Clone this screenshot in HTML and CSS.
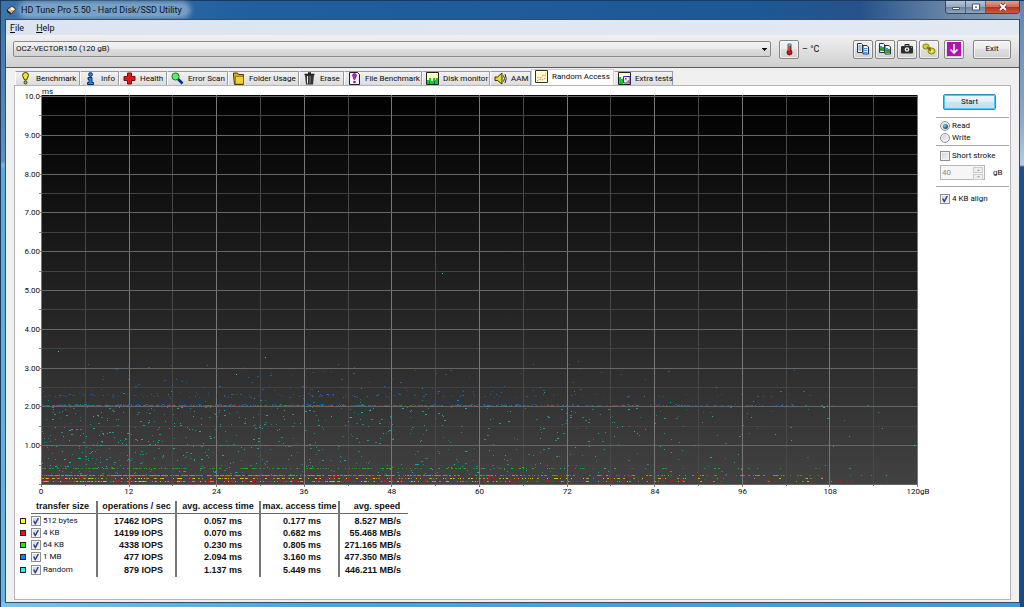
FILE: index.html
```
<!DOCTYPE html>
<html lang="en">
<head>
<meta charset="utf-8">
<title>HD Tune Pro 5.50 - Hard Disk/SSD Utility</title>
<link rel="stylesheet" href="styles.css">
</head>
<body>
<div class="window">
  <header class="titlebar">
    <svg class="app-icon" viewBox="0 0 12 12"><path d="M1 6 6 2l5 3-5 5z" fill="#e8c9a0" stroke="#3b2a20"/><path d="M1 6v2l4 3 1-1z" fill="#222"/><circle cx="7" cy="5" r="1.6" fill="#fff"/><path d="M5 7l4-1-3 3z" fill="#d08a3c"/></svg>
    <h1 class="title">HD Tune Pro 5.50 - Hard Disk/SSD Utility</h1>
    <div class="caption">
      <button class="cap" aria-label="Minimize"><svg viewBox="0 0 10 10"><path d="M1.500 5.500h7v2h-7z" fill="#fff" stroke="#44566c"/></svg></button>
      <button class="cap" aria-label="Maximize"><svg viewBox="0 0 10 10"><path d="M1.500 2h7v6h-7z" fill="#fff" stroke="#44566c"/><path d="M4 4.500h2v1.200H4z" fill="#44566c"/></svg></button>
      <button class="cap cap-close" aria-label="Close"><svg viewBox="0 0 10 10"><path d="M2 2l6 6M8 2 2 8" stroke="#6b2a25" stroke-width="3.600"/><path d="M2 2l6 6M8 2 2 8" stroke="#fff" stroke-width="2"/></svg></button>
    </div>
  </header>
  <div class="client">
    <nav class="menu"><a href="#file"><u>F</u>ile</a><a href="#help"><u>H</u>elp</a></nav>
    <div class="toolbar">
      <select class="drive" aria-label="Drive"><option>OCZ-VECTOR150 (120 gB)</option></select>
      <button class="tool" aria-label="Temperature"><svg viewBox="0 0 14 14"><path d="M6 2h3v7H6z" fill="#c81414" stroke="#333" stroke-width=".8"/><path d="M6.400 1h2.200v3H6.400z" fill="#4ad0d8"/><circle cx="7.500" cy="10.500" r="2.500" fill="#d01010" stroke="#401010" stroke-width=".8"/><path d="M7 4v5" stroke="#ff7a6a"/></svg></button>
      <span class="temp">– °C</span>
      <div class="tools">
        <button class="tool" aria-label="Copy text"><svg viewBox="0 0 14 14"><path d="M1.500 1.500h4l1 1v8h-5zM7 3.500h4l1.500 1.500v7H7z" fill="#eef6ff" stroke="#333"/><path d="M2.500 4h3M2.500 6h3M2.500 8h3M8 6.500h3.500M8 8.500h3.500M8 10.500h3.500" stroke="#3b8ad8"/></svg></button>
        <button class="tool" aria-label="Copy image"><svg viewBox="0 0 14 14"><path d="M1.500 1.500h4l1 1v8h-5zM7 3.500h4l1.500 1.500v7H7z" fill="#eef6ff" stroke="#333"/><path d="M2 5h4v4H2zM7.500 7h4.500v4H7.500z" fill="#28a038"/><path d="M2 4h2v2H2zM8 6h2v2H8z" fill="#3090d0"/></svg></button>
        <button class="tool" aria-label="Save screenshot"><svg viewBox="0 0 14 14"><path d="M5 2.500h4v2H5z" fill="#aaa" stroke="#222"/><rect x="1" y="4" width="12" height="7.500" rx="1" fill="#29302f"/><circle cx="7" cy="7.500" r="2.300" fill="#f4f4f4"/><circle cx="7" cy="7.500" r="1" fill="#333"/><path d="M11 5h1v1h-1z" fill="#3ad060"/></svg></button>
        <button class="tool" aria-label="Options"><svg viewBox="0 0 14 14"><g fill="#d8cf20" stroke="#77700a" stroke-width=".8"><ellipse cx="4" cy="4.500" rx="3.200" ry="2.600"/><ellipse cx="9.500" cy="9" rx="3.500" ry="3"/></g><path d="M5 5l4 4M8 5v4" stroke="#77700a" stroke-width="1.400"/><circle cx="9.800" cy="9.300" r="1.100" fill="#fff8a0"/></svg></button>
        <button class="tool tool-gap" aria-label="Save"><svg viewBox="0 0 14 14"><path d="M0 0h14v14H0z" fill="#b012b4"/><path d="M7 2v8M3.500 7.500 7 11l3.500-3.500" fill="none" stroke="#fff" stroke-width="1.600"/></svg></button>
      </div>
      <button class="push exit">Exit</button>
    </div>
    <main class="body">
      <div class="tabs" role="tablist">
        <button class="tab" role="tab"><svg viewBox="0 0 13 13"><path d="M3.500 3.500a3 3 0 0 1 6 0L7.500 8h-2z" fill="#f0e81c" stroke="#3b3a10"/><circle cx="6.500" cy="10.500" r="1.500" fill="#c9c114" stroke="#3b3a10"/></svg>Benchmark</button>
        <button class="tab" role="tab"><svg viewBox="0 0 13 13"><circle cx="6.500" cy="2.500" r="1.900" fill="#1c8df0" stroke="#102c60"/><path d="M4 5.500h4v5h1.500v2h-6v-2H5v-3H4z" fill="#1c8df0" stroke="#102c60"/></svg>Info</button>
        <button class="tab" role="tab"><svg viewBox="0 0 13 13"><path d="M4.500 1h4v3.500H12v4H8.500V12h-4V8.500H1v-4h3.500z" fill="#e01818" stroke="#701010"/></svg>Health</button>
        <button class="tab" role="tab"><svg viewBox="0 0 13 13"><path d="m7 7 4.500 4.500" stroke="#1420b0" stroke-width="2.600"/><circle cx="4.500" cy="4.500" r="3.600" fill="#58f060" stroke="#227838"/></svg>Error Scan</button>
        <button class="tab" role="tab"><svg viewBox="0 0 13 13"><path d="M1.500 3V1h4l1 1.500h5v10h-9z" fill="#d5a611" stroke="#453808"/><path d="M3.500 4.500h8v7.500h-8z" fill="#f2cf38" stroke="#705a10" stroke-width=".6"/></svg>Folder Usage</button>
        <button class="tab" role="tab"><svg viewBox="0 0 13 13"><path d="M1.500 2.500h10M5 1h3" stroke="#222" stroke-width="1.600"/><path d="M2 3h9l-1 9.500H3z" fill="#333"/><path d="M4.500 4v7.500" stroke="#eee"/><path d="M7 4v7.500" stroke="#888"/></svg>Erase</button>
        <button class="tab" role="tab"><svg viewBox="0 0 13 13"><path d="M1.500.500h8l2 2v10h-10z" fill="#f4f4ff" stroke="#222"/><path d="M4.500 3.500a2 2 0 0 1 4 0L7 7.500H6z" fill="#c81cc8" stroke="#601060" stroke-width=".6"/><circle cx="6.500" cy="10" r="1.300" fill="#8c148c"/></svg>File Benchmark</button>
        <button class="tab" role="tab"><svg viewBox="0 0 13 13"><path d="M.500.500h12v12H.500z" fill="#ffffc0" stroke="#222"/><path d="M1 12V8h2V6h2v3h2V6h2v2h1V6h2v6z" fill="#10d020"/><path d="M3.500 12V9M8.500 12V9" stroke="#1840d0"/></svg>Disk monitor</button>
        <button class="tab" role="tab"><svg viewBox="0 0 13 13"><path d="M1 5h2.500L8 1v11L3.500 8.500H1z" fill="#e8dc20" stroke="#333008"/><path d="M9.500 3.500q2 3 0 6M11 2q2.500 4.500 0 9" fill="none" stroke="#333008"/></svg>AAM</button>
        <button class="tab active" role="tab" aria-selected="true"><svg viewBox="0 0 13 13"><path d="M.500.500h12v12H.500z" fill="#ffffd0" stroke="#333"/><path d="M2 8l2-1 2 1 2-3 2 1 1-3" fill="none" stroke="#e88018" stroke-dasharray="1 .700"/><path d="M2 11l3-2 2 1 4-2" fill="none" stroke="#d04070" stroke-dasharray="1 1"/></svg>Random Access</button>
        <button class="tab" role="tab"><svg viewBox="0 0 13 13"><path d="M.500.500h12v12H.500z" fill="#fff" stroke="#222"/><path d="M1 1h11v2H1z" fill="#ffffc0"/><path d="M1 12V5h2v2h2v5z" fill="#10c828"/><path d="M5.500 4.500h6.500V11H5.500z" fill="#f0e0f0" stroke="#3030a0"/><path d="M7 6h1.500v1.500H7zM9.500 8.500H11V10H9.500z" fill="#d03030"/></svg>Extra tests</button>
      </div>
      <section class="panel">
        <div class="results">
          <div class="chart">
            <div class="unit">ms</div>
            <div class="y-axis"><span>10.0</span><span>9.00</span><span>8.00</span><span>7.00</span><span>6.00</span><span>5.00</span><span>4.00</span><span>3.00</span><span>2.00</span><span>1.00</span></div>
            <div class="plot"><svg id="plot" shape-rendering="crispEdges" role="img" aria-label="Random access time against position"></svg></div>
            <div class="x-axis"><div class="x-labels"><span>0</span><span>12</span><span>24</span><span>36</span><span>48</span><span>60</span><span>72</span><span>84</span><span>96</span><span>108</span><span>120gB</span></div></div>
          </div>
          <table class="stats">
            <thead><tr><th class="swatch-cell"></th><th class="c1">transfer size</th><th class="c2">operations / sec</th><th class="c3">avg. access time</th><th class="c4">max. access time</th><th class="c5">avg. speed</th></tr></thead>
            <tbody>
              <tr><td class="swatch-cell"><i class="swatch yellow"></i></td><td><label><input type="checkbox" checked>512 bytes</label></td><td>17462 IOPS</td><td>0.057 ms</td><td>0.177 ms</td><td>8.527 MB/s</td></tr>
              <tr><td class="swatch-cell"><i class="swatch red"></i></td><td><label><input type="checkbox" checked>4 KB</label></td><td>14199 IOPS</td><td>0.070 ms</td><td>0.682 ms</td><td>55.468 MB/s</td></tr>
              <tr><td class="swatch-cell"><i class="swatch green"></i></td><td><label><input type="checkbox" checked>64 KB</label></td><td>4338 IOPS</td><td>0.230 ms</td><td>0.805 ms</td><td>271.165 MB/s</td></tr>
              <tr><td class="swatch-cell"><i class="swatch blue"></i></td><td><label><input type="checkbox" checked>1 MB</label></td><td>477 IOPS</td><td>2.094 ms</td><td>3.160 ms</td><td>477.350 MB/s</td></tr>
              <tr><td class="swatch-cell"><i class="swatch cyan"></i></td><td><label><input type="checkbox" checked>Random</label></td><td>879 IOPS</td><td>1.137 ms</td><td>5.449 ms</td><td>446.211 MB/s</td></tr>
            </tbody>
          </table>
        </div>
        <aside class="side">
          <button class="push start">Start</button>
          <div class="group modes">
            <label><input type="radio" name="mode" checked>Read</label>
            <label><input type="radio" name="mode">Write</label>
          </div>
          <div class="group stroke">
            <label><input type="checkbox">Short stroke</label>
            <div class="size"><span class="spin"><input id="size" type="text" value="40" disabled><span class="arrows"><button disabled aria-label="Increase"><svg viewBox="0 0 6 4"><path d="M1 3h4L3 1z" fill="#999"/></svg></button><button disabled aria-label="Decrease"><svg viewBox="0 0 6 4"><path d="M1 1h4L3 3z" fill="#999"/></svg></button></span></span><label for="size">gB</label></div>
          </div>
          <div class="group align"><label><input type="checkbox" checked>4 KB align</label></div>
        </aside>
      </section>
    </main>
  </div>
</div>
<script src="plot.js"></script>
</body>
</html>
```
FILE: styles.css
```
* { box-sizing: border-box; }
body {
  margin: 0;
  font: 8px/10px Roboto, sans-serif;
  color: #0c0c0c;
}
button, input, select { font: inherit; color: inherit; margin: 0; padding: 0; }
svg { display: block; }

.window {
  min-height: 100vh;
  display: flex;
  flex-direction: column;
  padding: 0 4px 4px;
  border: 1px solid #1d3a5c;
  border-width: 1px 0 0 1px;
  background:
    linear-gradient(#5d86b4, #8aa9cc 120px, #b4cce4 164px, #1b4f8f 166px, #174a88) right / 4px 100% no-repeat,
    linear-gradient(90deg, #7cc4ee, #4aa6dc 30%, #3f9ad6) bottom / 100% 5px no-repeat,
    linear-gradient(#3873ab, #5b93c2 160px, #86b3dc 164px, #5aabdc 168px, #66b4e2) left / 6px 100% no-repeat,
    linear-gradient(90deg, #3a72a9, #1f5f9f 25%, #1c5896 75%, #26528b 84%, #6d88a8 93%, #8ba0b8);
}
.titlebar { display: flex; align-items: center; height: 18px; gap: 4px; padding-left: 1px; }
.app-icon { width: 11px; height: 12px; }
.title {
  margin: 0;
  padding: 0 6px 0 0;
  font: 9px/12px Roboto, "Noto Sans", sans-serif;
  color: #0c1420;
  border-radius: 7px;
  background: rgba(170, 196, 220, .6);
  box-shadow: 0 0 5px 3px rgba(170, 196, 220, .6);
}
.caption {
  display: flex;
  align-self: flex-start;
  margin-left: auto;
  border: 1px solid #35475c;
  border-top: 0;
  border-radius: 0 0 4px 4px;
  overflow: hidden;
}
.cap {
  width: 20px;
  height: 12px;
  display: grid;
  place-items: center;
  border: 0;
  border-right: 1px solid #4d6078;
  background: linear-gradient(#b7c5d5, #95a8bd 48%, #6d839e 50%, #8fa6c0);
}
.cap svg { width: 10px; height: 10px; }
.cap-close { width: 33px; border-right: 0; background: linear-gradient(#dba194, #cb6a56 48%, #b62f18 50%, #cf5b3c); }

.client {
  flex: 1;
  display: flex;
  flex-direction: column;
  border: 1px solid #3b4c5e;
  background: #f0f0f0;
}
.menu {
  height: 15px;
  display: flex;
  gap: 12px;
  padding-left: 4px;
  background: linear-gradient(90deg, #dbe4f0, #e3e9f3);
  font: 9px/16px Roboto, "Noto Sans", sans-serif;
}
.menu a { color: inherit; text-decoration: none; }
.toolbar {
  height: 33px;
  display: flex;
  align-items: center;
  padding: 0 8px 4px 7px;
  border-bottom: 1px solid #5c5c5c;
  background: linear-gradient(#f1f1f1, #cfcfcf);
}
.drive {
  flex: 1;
  height: 16px;
  appearance: none;
  padding: 0 2px;
  border: 1px solid #8a8a8a;
  border-radius: 2px;
  background:
    linear-gradient(#111, #111) right 3px top 6px / 5px 1px no-repeat,
    linear-gradient(#111, #111) right 4px top 7px / 3px 1px no-repeat,
    linear-gradient(#111, #111) right 5px top 8px / 1px 1px no-repeat,
    linear-gradient(#f2f2f2, #ebebeb 48%, #dddddd 50%, #d2d2d2);
}
.tool, .push {
  display: grid;
  place-items: center;
  border: 1px solid #858585;
  border-radius: 2px;
  background: linear-gradient(#f3f3f3, #ebebeb 48%, #dedede 50%, #d2d2d2);
  box-shadow: inset 0 0 0 1px rgba(255, 255, 255, .6);
}
.tool { width: 20px; height: 19px; }
.tool svg { width: 14px; height: 14px; }
.drive + .tool { margin-left: 8px; }
.temp { width: 54px; padding-left: 3px; font-size: 9px; }
.tools { display: flex; gap: 2px; }
.tool-gap { margin-left: 3px; }
.exit { width: 38px; height: 19px; margin-left: 9px; }

.body { flex: 1; display: flex; flex-direction: column; padding: 1px 8px 2px; }
.tabs {
  display: grid;
  grid-template-columns: 65px 39px 48px 61px 71px 45px 78px 68px 41px 83px 59px;
  align-items: end;
  height: 16px;
  padding-left: 1px;
}
.tab {
  display: flex;
  align-items: center;
  gap: 4px;
  height: 14px;
  padding: 0 0 0 3px;
  border: 1px solid #9a9ca4;
  border-bottom: 0;
  border-left-color: #fff;
  background: linear-gradient(#f2f2f2, #dcdcdc);
  white-space: nowrap;
}
.tab svg { width: 13px; height: 13px; flex: none; }
.tab.active { height: 16px; padding-bottom: 2px; background: #fff; border-color: #d0d0d0; }
.panel {
  flex: 1;
  display: flex;
  border: 1px solid #b4b4b8;
  background: #fff;
}
.results { flex: 1; min-width: 0; display: flex; flex-direction: column; }
.chart {
  flex: 1;
  display: grid;
  grid-template: 9px 1fr 13px / 26px 1fr;
}
.unit { grid-column: 2; padding-left: 1px; line-height: 11px; }
.y-axis {
  grid-row: 2;
  display: grid;
  grid-template-rows: repeat(10, 1fr);
  margin: -3px 0 5px;
  padding-right: 1px;
  text-align: right;
}
.plot { grid-row: 2; min-height: 200px; display: grid; background: linear-gradient(#000, #424242); }
.plot svg { width: 100%; height: 100%; overflow: visible; }
.x-axis { grid-area: 3 / 2; }
.x-labels {
  display: grid;
  grid-template-columns: repeat(11, 1fr);
  margin: 0 -5%;
  line-height: 13px;
  text-align: center;
}

.stats {
  width: 393px;
  margin: 3px 0 22px;
  border-collapse: collapse;
  table-layout: fixed;
  font: bold 9px/11px "Liberation Sans", Arial, sans-serif;
  color: #111;
}
.stats th, .stats td { height: 12px; padding: 0; white-space: nowrap; }
.stats th { border-bottom: 1px solid #666; border-left: 2px solid #777; }
.stats td { border-left: 2px solid #777; text-align: right; }
.stats .swatch-cell { width: 16px; border: 0; padding-left: 5px; text-align: left; }
.stats th:nth-child(2), .stats td:nth-child(2) { border-left: 0; text-align: left; }
.stats th:nth-child(2) { padding-left: 5px; }
.stats td:nth-child(3) { padding-right: 12px; }
.stats td:nth-child(4), .stats td:nth-child(5) { padding-right: 17px; }
.stats td:nth-child(6) { padding-right: 7px; }
.stats th:nth-child(6) { padding-left: 6px; }
.stats tbody tr:first-child td { height: 14px; padding-top: 2px; }
.stats tbody tr:last-child td { height: 14px; }
.c1 { width: 66px; }
.c2 { width: 79px; }
.c3 { width: 84px; }
.c4 { width: 79px; }
.stats label { font: 8px/10px Roboto, sans-serif; }
.swatch { display: block; width: 6px; height: 6px; border: 1px solid #222; }
.yellow { background: #ffff20; }
.red { background: #f01010; }
.green { background: #10f020; }
.blue { background: #1080ff; }
.cyan { background: #20f0f0; }

label { display: flex; align-items: center; gap: 2px; }
input[type="checkbox"], input[type="radio"] {
  appearance: none;
  flex: none;
  width: 10px;
  height: 10px;
  display: grid;
  place-items: center;
  border: 1px solid #8e8f8f;
  background: linear-gradient(135deg, #cdd2d8, #f6f6f6);
  box-shadow: inset 0 0 0 1px #f4f4f4;
}
input[type="checkbox"]:checked::before {
  content: "";
  width: 6px;
  height: 7px;
  background: #31418c;
  clip-path: polygon(0 45%, 22% 40%, 38% 65%, 80% 0, 100% 8%, 45% 100%, 32% 100%);
}
input[type="radio"] { border-radius: 50%; }
input[type="radio"]:checked::before {
  content: "";
  width: 5px;
  height: 5px;
  border-radius: 50%;
  background: radial-gradient(circle at 40% 35%, #7fd4f0, #0c4a70 70%);
}

.side { width: 92px; padding: 8px 1px 0 18px; }
.start {
  width: 53px;
  height: 16px;
  margin: 0 0 7px 7px;
  border-color: #2f8fbd;
  box-shadow: inset 0 0 0 1px #45cdf5;
  background: linear-gradient(#eef7fc, #e0f0f9 48%, #cfe5f2 50%, #c4dcea);
}
.group { border-top: 1px solid #a8a8a8; padding-left: 4px; }
.modes { height: 28px; padding-top: 2px; }
.modes label { height: 12px; }
.stroke { height: 41px; padding-top: 5px; }
.size { display: flex; align-items: center; gap: 8px; margin-top: 4px; }
.spin { display: flex; width: 45px; height: 15px; border: 1px solid #b4b8bc; background: #f6f6f6; }
.spin input { width: 31px; border: 0; padding-left: 1px; background: none; color: #8c8c8c; }
.arrows { flex: 1; display: grid; gap: 1px; padding: 1px; }
.arrows button { display: grid; place-items: center; border: 1px solid #ccc; background: #eee; }
.arrows svg { width: 5px; height: 4px; }
.align { padding-top: 7px; }
```
FILE: plot.js
```
// Draws the grid and the access-time samples of each transfer size.
const svg = document.getElementById("plot");
let width, height, ms, seed;

function box(x, y, w, h, fill, opacity) {
  const r = document.createElementNS("http://www.w3.org/2000/svg", "rect");
  const attrs = { x, y, width: w, height: h, fill, "fill-opacity": opacity };
  for (const name in attrs) r.setAttribute(name, attrs[name]);
  svg.appendChild(r);
}

// Seeded generator, so that a redraw keeps the same samples.
function rnd() {
  seed = (seed + 0x6d2b79f5) | 0;
  let t = Math.imul(seed ^ (seed >>> 15), 1 | seed);
  t = (t + Math.imul(t ^ (t >>> 7), 61 | t)) ^ t;
  return ((t ^ (t >>> 14)) >>> 0) / 4294967296;
}
const levelY = value => Math.round(height - 1 - value * ms);

// Samples thin out toward the end of the drive.
function position() {
  for (;;) {
    const u = rnd();
    if (rnd() < Math.pow(1 - u, 1.1) + 0.03) return Math.floor(1 + u * width * 0.965);
  }
}
function scatter(count, color, level) {
  for (let i = 0; i < count; i++) {
    box(position(), levelY(level()), rnd() < 0.3 ? 2 : 1, 1, color, (0.4 + rnd() * 0.6).toFixed(2));
  }
}

function draw() {
  svg.replaceChildren();
  width = svg.parentElement.clientWidth;
  height = svg.parentElement.clientHeight;
  ms = (height - 2) / 10;
  seed = 20150;

  for (const major of [false, true]) {
    for (let i = major ? 0 : 1; i <= 20; i += 2) {
      const x = Math.round(i * (width - 1) / 20);
      box(x, 0, 1, height, major ? "#777" : "#484848", 1);
      box(x, height - 1, 1, major ? 3 : 2, "#777", 1);
      const y = levelY(i / 2);
      box(0, y, width, 1, major ? "#666" : "#424242", 1);
      box(-2, y, 2, 1, "#888", 1);
    }
  }

  scatter(720, "#18b0b0", () => 0.25 + rnd() * 1.8);
  scatter(45, "#18a0a0", () => 2 + rnd() * 0.5);
  scatter(520, "#1c70c8", () => 2.04);
  scatter(110, "#1c68b8", () => 2.07);
  scatter(110, "#1c68b8", () => 2.25 + rnd() * 0.08);
  scatter(120, "#1c68b8", () => 2.25 + Math.pow(rnd(), 2) * 0.85);
  scatter(600, "#20d820", () => 0.23);
  scatter(230, "#20b820", () => 0.42);
  scatter(420, "#d01818", () => 0.08);
  scatter(420, "#d01818", () => 0.05 + rnd() * 0.16);
  scatter(220, "#d8d020", () => 0.15);
  scatter(160, "#d8c820", () => 0.08);

  // Slowest samples: position in gB, time in ms.
  for (const [gb, t] of [[54.9, 5.45], [2.3, 3.44], [30.6, 3.27], [26.7, 2.83], [119.5, 1]]) {
    box(Math.round(gb / 120 * width), levelY(t), 1, 1, "#20d0b0", 1);
  }
  for (const [gb, t] of [[6.4, 3.1], [40.7, 3.1], [22.7, 3.07], [73.5, 3.16], [67.3, 3.08], [103, 2.95]]) {
    box(Math.round(gb / 120 * width), levelY(t), 1, 1, "#1c78d8", 0.8);
  }
}

draw();
addEventListener("resize", draw);
```
